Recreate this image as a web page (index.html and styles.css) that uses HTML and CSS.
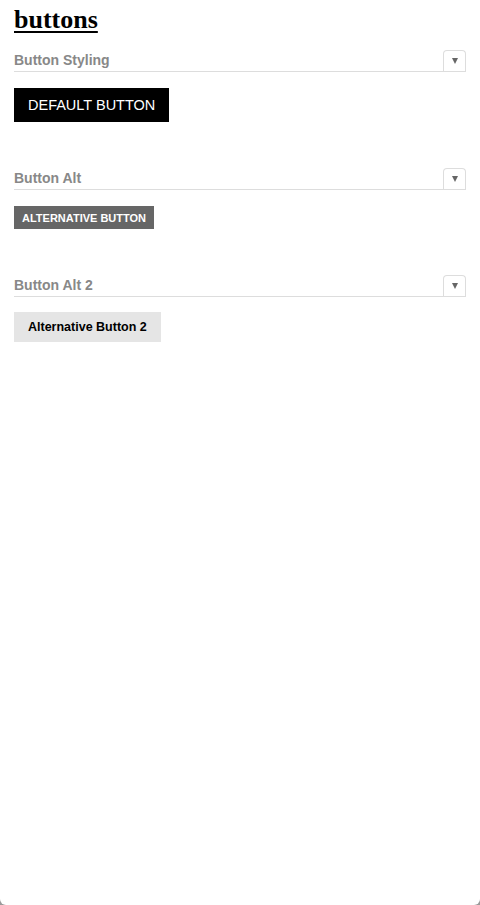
FILE: index.html
```html
<!DOCTYPE html>
<html>
<head>
<meta charset="utf-8">
<link rel="stylesheet" href="styles.css">
</head>
<body>
<div class="page">
  <h1 class="title">buttons</h1>
  <section class="section">
    <div class="section-head">
      <span class="section-title">Button Styling</span>
      <span class="toggle"><span class="tri"></span></span>
    </div>
    <div class="section-body">
      <button class="btn btn-default">DEFAULT BUTTON</button>
    </div>
  </section>
  <section class="section">
    <div class="section-head">
      <span class="section-title">Button Alt</span>
      <span class="toggle"><span class="tri"></span></span>
    </div>
    <div class="section-body">
      <button class="btn btn-alt">ALTERNATIVE BUTTON</button>
    </div>
  </section>
  <section class="section">
    <div class="section-head">
      <span class="section-title">Button Alt 2</span>
      <span class="toggle"><span class="tri"></span></span>
    </div>
    <div class="section-body section-body-tight">
      <button class="btn btn-alt2">Alternative Button 2</button>
    </div>
  </section>
</div>
</body>
</html>
```
FILE: styles.css
```css
html, body {
  margin: 0;
  padding: 0;
}
body {
  background: #9a9a9a;
  font-family: "Liberation Sans", Arial, sans-serif;
}
.page {
  background: #fff;
  height: 905px;
  box-sizing: border-box;
  padding: 6px 14px 0 14px;
  border-radius: 0 0 6px 6px;
}
.title {
  font-family: "Liberation Serif", Georgia, serif;
  font-weight: bold;
  font-size: 26px;
  line-height: 28px;
  margin: 0 0 15px 0;
  text-decoration: underline;
  text-decoration-thickness: 2px;
  text-underline-offset: 3px;
  color: #000;
}
.section {
  margin-bottom: 45px;
}
.section-head {
  display: flex;
  align-items: flex-end;
  justify-content: space-between;
  height: 22px;
  border-bottom: 1px solid #ddd;
}
.section-title {
  font-size: 14px;
  font-weight: bold;
  color: #888;
  line-height: 16px;
  padding-bottom: 3px;
}
.toggle {
  width: 23px;
  height: 21px;
  box-sizing: border-box;
  border: 1px solid #ddd;
  border-bottom: none;
  border-radius: 4px 4px 0 0;
  display: flex;
  align-items: center;
  justify-content: center;
}
.tri {
  width: 0;
  height: 0;
  border-left: 3.5px solid transparent;
  border-right: 3.5px solid transparent;
  border-top: 6px solid #666;
}
.section-body {
  padding-top: 16px;
  display: flex;
}
.section-body-tight {
  padding-top: 15px;
}
.btn {
  border: none;
  margin: 0;
  font-family: "Liberation Sans", Arial, sans-serif;
  cursor: pointer;
}
.btn-default {
  background: #000;
  color: #fff;
  font-size: 14.5px;
  padding: 0 14px;
  height: 34px;
}
.btn-alt {
  background: #666;
  color: #fff;
  font-weight: bold;
  font-size: 11px;
  padding: 0 8px;
  height: 23px;
}
.btn-alt2 {
  background: #e5e5e5;
  color: #000;
  font-weight: bold;
  font-size: 12.5px;
  padding: 0 14px;
  height: 30px;
}
```
